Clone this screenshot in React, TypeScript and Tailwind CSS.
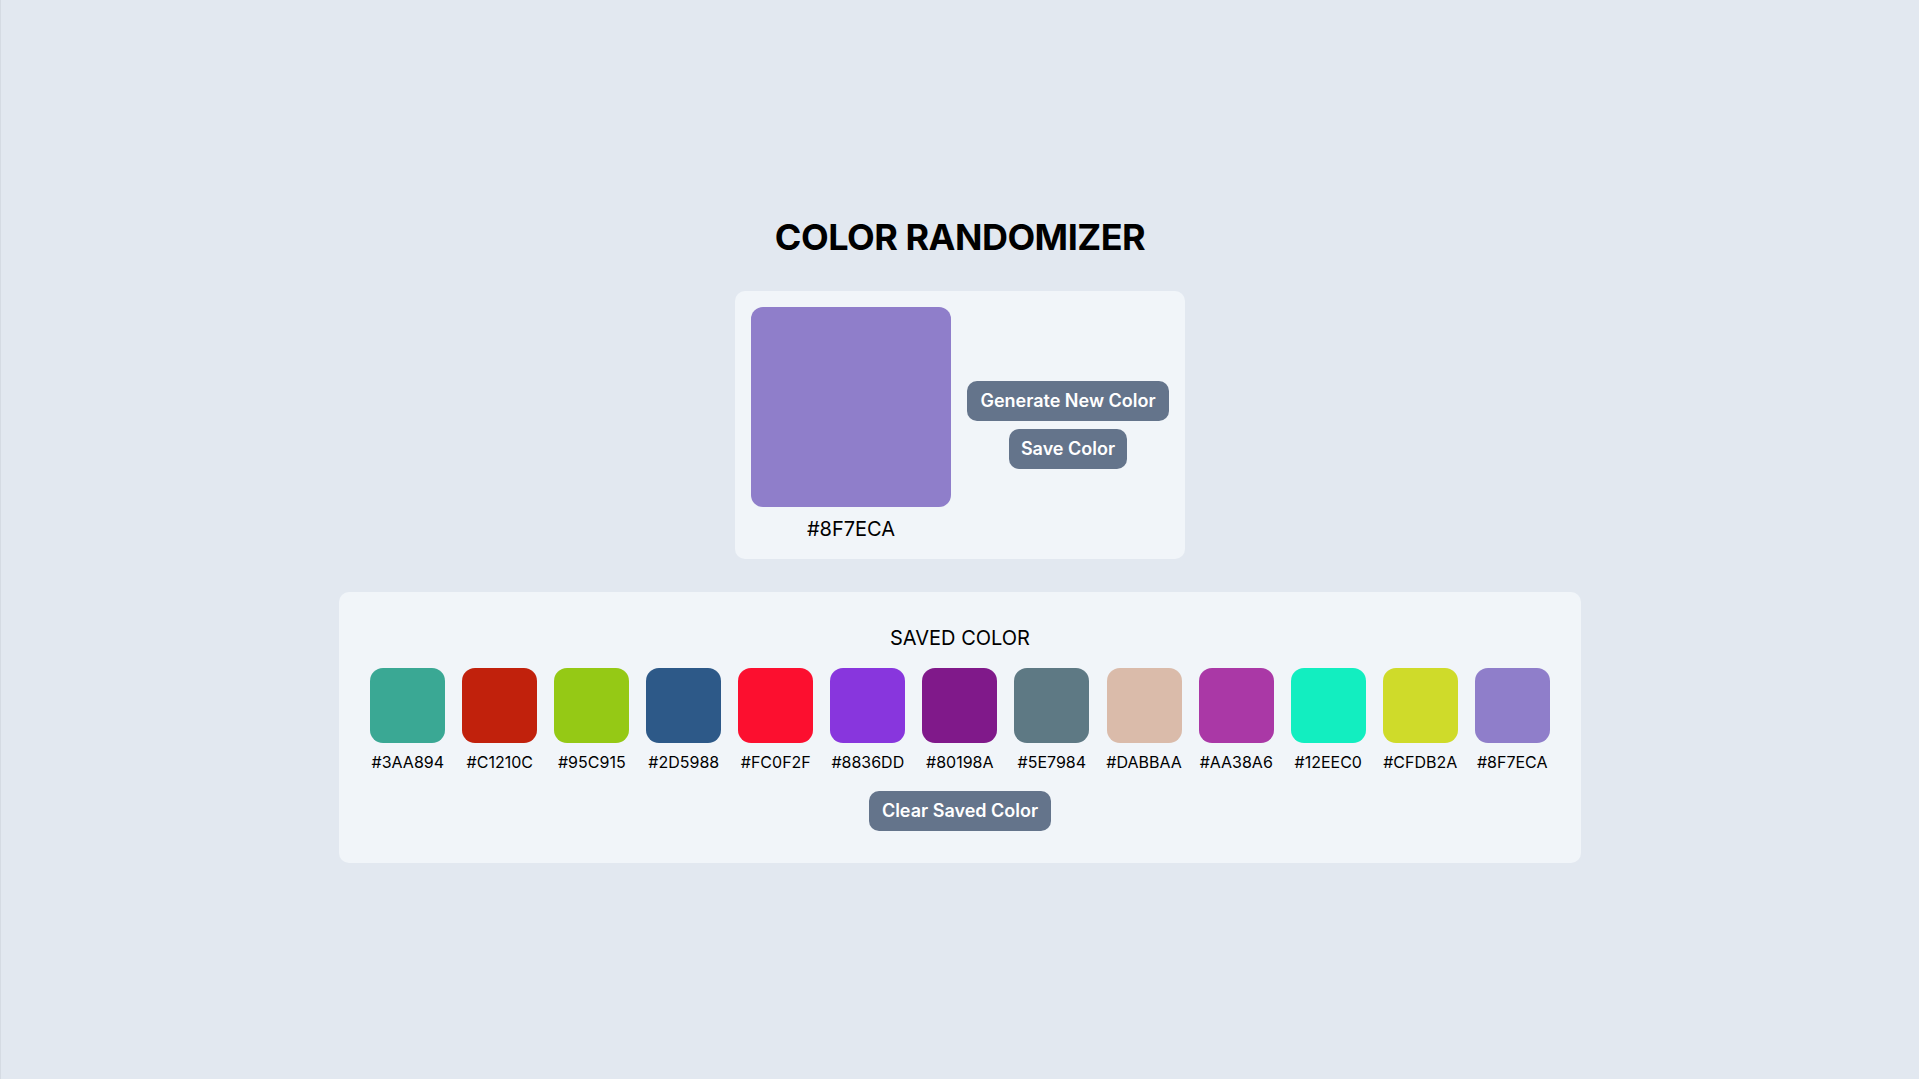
import React from "react";

const saved = [
  "#3AA894",
  "#C1210C",
  "#95C915",
  "#2D5988",
  "#FC0F2F",
  "#8836DD",
  "#80198A",
  "#5E7984",
  "#DABBAA",
  "#AA38A6",
  "#12EEC0",
  "#CFDB2A",
  "#8F7ECA",
];

export default function App() {
  return (
    <div className="min-h-screen w-full bg-[#e2e8f0] border-l border-[#d5dbe3] flex flex-col items-center justify-center font-[Inter,sans-serif] text-black">
      <h1 className="text-[36px] leading-[40px] font-bold tracking-[-0.5px] mb-[34px]">
        COLOR RANDOMIZER
      </h1>

      <div className="bg-[#f1f5f9] rounded-[10px] p-4 flex items-center gap-4">
        <div className="flex flex-col items-center">
          <div
            className="w-[200px] h-[200px] rounded-[12px]"
            style={{ backgroundColor: "#8F7ECA" }}
          />
          <div className="mt-2 text-[20px] leading-[28px]">#8F7ECA</div>
        </div>
        <div className="w-[202px] flex flex-col items-center gap-2">
          <button className="h-10 px-[13px] rounded-[10px] bg-[#64748b] text-white text-[18px] leading-[28px] font-semibold">
            Generate New Color
          </button>
          <button className="h-10 px-[12px] rounded-[10px] bg-[#64748b] text-white text-[18px] leading-[28px] font-semibold">
            Save Color
          </button>
        </div>
      </div>

      <div className="mt-[33px] w-[1242px] bg-[#f1f5f9] rounded-[10px] px-8 pt-8 pb-8 flex flex-col items-center">
        <div className="text-[20px] leading-[28px]">SAVED COLOR</div>
        <div className="mt-4 flex justify-center gap-[17px]">
          {saved.map((c, i) => (
            <div key={i} className="flex flex-col items-center min-w-[75px]">
              <div
                className="w-[75px] h-[75px] rounded-[13px]"
                style={{ backgroundColor: c }}
              />
              <div className="mt-[7px] text-[16px] leading-[24px]">{c}</div>
            </div>
          ))}
        </div>
        <button className="mt-[17px] h-10 px-[13px] rounded-[10px] bg-[#64748b] text-white text-[18px] leading-[28px] font-semibold">
          Clear Saved Color
        </button>
      </div>
    </div>
  );
}
